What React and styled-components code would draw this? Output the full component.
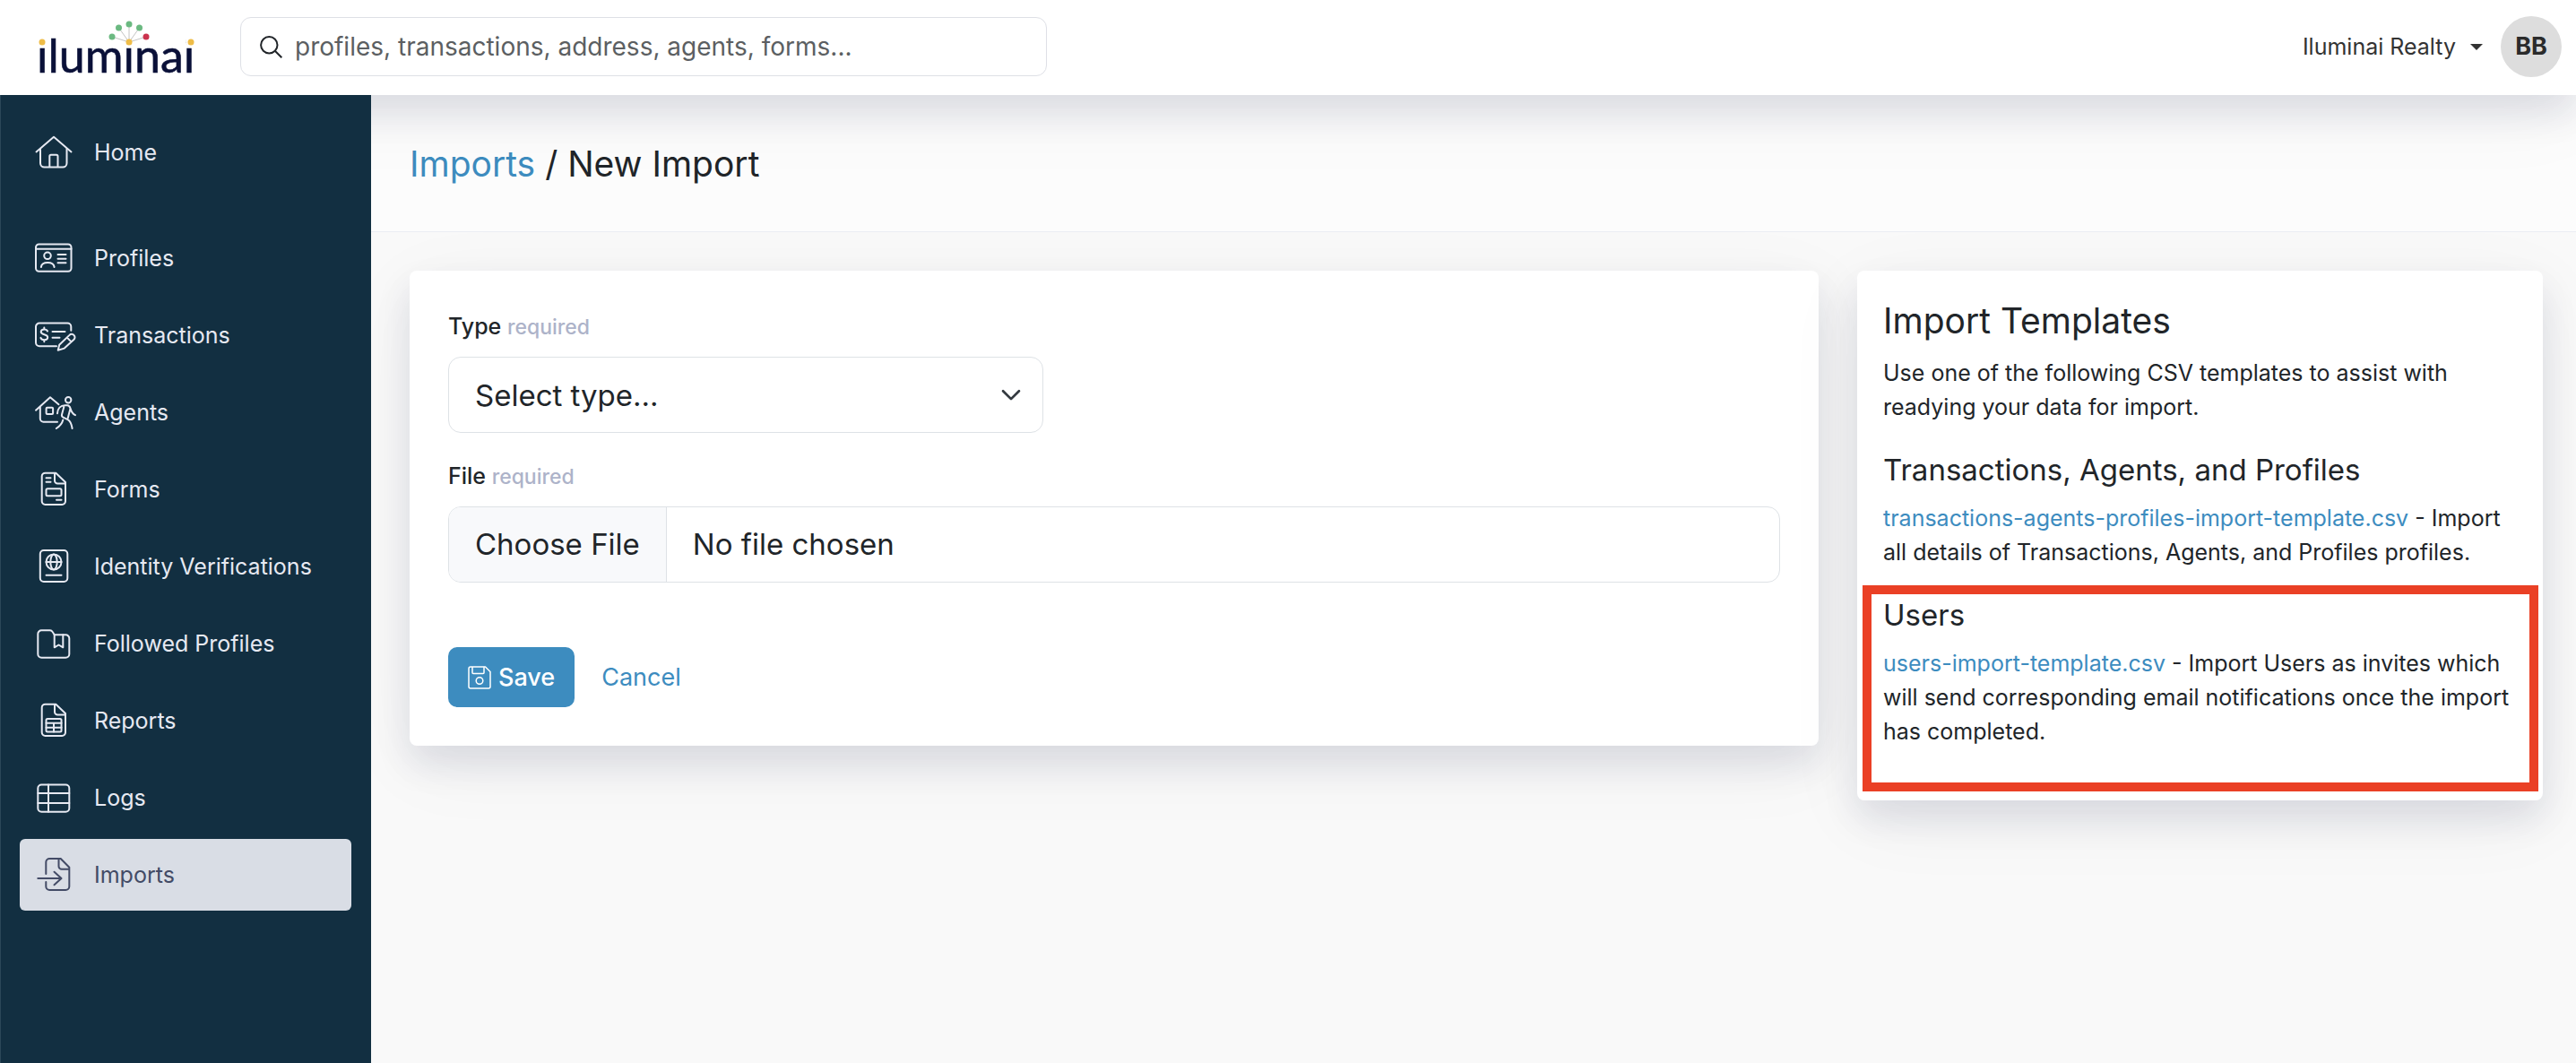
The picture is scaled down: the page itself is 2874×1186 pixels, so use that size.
import React from 'react';
import styled, { createGlobalStyle, css } from 'styled-components';

const GlobalStyle = createGlobalStyle`
    *, *::before, *::after {
        box-sizing: border-box;
    }

    body {
        margin: 0;
        background: #f9f9f9;
        color: #212529;
        font-family: Inter, "Liberation Sans", sans-serif;
        font-size: 25px;
        line-height: 38px;
    }

    h1, h2, h3, p, ul {
        margin: 0;
        padding: 0;
    }

    a {
        color: #3d8cbf;
        text-decoration: none;
    }

    button, input, select {
        font: inherit;
        color: inherit;
    }
`;

const softShadow = css`
    box-shadow: 0 20px 40px rgba(20, 30, 80, 0.11), 0 20px 90px rgba(0, 0, 0, 0.05);
`;

const Page = styled.div`
    display: flex;
    flex-direction: column;
    min-height: 100vh;
`;

const Header = styled.header`
    position: relative;
    z-index: 1;
    display: flex;
    align-items: center;
    height: 106px;
    padding: 0 16px 2px 36px;
    background: white;
    ${softShadow}
`;

const LogoLink = styled.a`
    display: flex;
    width: 232px;
`;

const SearchBox = styled.label`
    display: flex;
    align-items: center;
    gap: 14px;
    flex: 0 1 900px;
    height: 66px;
    padding: 0 21px;
    border: 1px solid #dee0e6;
    border-radius: 12px;
`;

const SearchInput = styled.input`
    flex: 1;
    min-width: 0;
    padding: 0;
    border: 0;
    outline: 0;
    background: none;
    font-size: 28px;

    &::placeholder {
        color: #5c5f62;
        opacity: 1;
    }
`;

const Account = styled.div`
    display: flex;
    align-items: center;
    gap: 20px;
    margin-left: auto;
`;

const AccountButton = styled.button`
    display: flex;
    align-items: center;
    gap: 16px;
    padding: 0;
    border: 0;
    background: none;
    color: #333;
`;

const Avatar = styled.span`
    display: flex;
    align-items: center;
    justify-content: center;
    width: 68px;
    height: 68px;
    border-radius: 50%;
    background: #ddd;
    color: #2b2b2b;
    font-size: 27px;
    font-weight: 700;
`;

const Body = styled.div`
    display: flex;
    flex: 1;
`;

const Sidebar = styled.nav`
    position: relative;
    z-index: 2;
    flex: 0 0 414px;
    padding: 24px 22px 24px 21px;
    border-left: 1px solid #2b4758;
    background: #122f41;
`;

const NavList = styled.ul`
    display: flex;
    flex-direction: column;
    gap: 6px;
    list-style: none;

    & + & {
        margin-top: 38px;
    }
`;

const NavLink = styled.a`
    display: flex;
    align-items: center;
    gap: 21px;
    height: 80px;
    padding: 0 14px;
    border-radius: 6px;
    background: ${props => (props.$active ? '#d9dde5' : 'transparent')};
    color: ${props => (props.$active ? '#434b66' : '#e6e9f2')};
`;

const NavIcon = styled.svg`
    flex: none;
    width: 48px;
    height: 48px;
    fill: none;
    stroke: currentColor;
    stroke-width: 2;
    stroke-linecap: round;
    stroke-linejoin: round;
    overflow: visible;
`;

const Main = styled.main`
    flex: 1;
    min-width: 0;
`;

const TitleBar = styled.div`
    padding: 50px 43px 49px;
    border-bottom: 1px solid #ebedf3;
    background: #fcfcfc;
`;

const Title = styled.h1`
    font-size: 39px;
    font-weight: 400;
    line-height: 53px;
`;

const Columns = styled.div`
    display: grid;
    grid-template-columns: minmax(0, 1572fr) minmax(0, 765fr);
    align-items: start;
    gap: 43px;
    padding: 43px 37px 43px 43px;
`;

const Card = styled.section`
    padding: ${props => props.$padding}px;
    border-radius: 8px;
    background: white;
    ${softShadow}
`;

const Field = styled.div`
    margin-bottom: 29px;
`;

const Label = styled.label`
    display: block;
    margin-bottom: 14px;
    font-weight: 500;
`;

const Required = styled.span`
    color: #adb3c9;
    font-size: 23px;
`;

const SelectWrap = styled.div`
    display: grid;
    align-items: center;
    width: 664px;
    max-width: 100%;

    > * {
        grid-area: 1 / 1;
    }

    > svg {
        justify-self: end;
        margin-right: 25px;
        pointer-events: none;
    }
`;

const Select = styled.select`
    width: 100%;
    height: 85px;
    padding: 0 29px;
    border: 1px solid #dee2e6;
    border-radius: 14px;
    appearance: none;
    background: white;
    font-size: 33px;
`;

const FileInput = styled.input`
    display: block;
    width: 100%;
    height: 85px;
    border: 1px solid #dee2e6;
    border-radius: 14px;
    overflow: hidden;
    font-size: 33px;
    line-height: 83px;

    &::file-selector-button {
        height: 83px;
        margin: 0 29px 0 0;
        padding: 0 29px;
        border: 0;
        border-right: 1px solid #dee2e6;
        background: #f8f9fb;
        color: inherit;
        font: inherit;
    }
`;

const Actions = styled.div`
    display: flex;
    align-items: center;
    gap: 30px;
    margin-top: 72px;
    font-size: 27px;
`;

const SaveButton = styled.button`
    display: flex;
    align-items: center;
    gap: 8px;
    height: 67px;
    padding: 0 22px;
    border: 0;
    border-radius: 10px;
    background: #3d8cbf;
    color: white;
    font-weight: 500;
`;

const CardTitle = styled.h2`
    margin-bottom: 12px;
    font-size: 39px;
    font-weight: 400;
    line-height: 54px;
`;

const Template = styled.div`
    position: relative;
    margin: 29px 0;
`;

const TemplateTitle = styled.h3`
    margin-bottom: 12px;
    font-size: 33px;
    font-weight: 400;
    line-height: 45px;
`;

const Highlight = styled.div`
    position: absolute;
    inset: -11px -24px -48px -23px;
    border: 10px solid #ea4025;
    pointer-events: none;
`;

const icons = {
    home: (
        <>
            <path d="M4.5 23.4 24 6.8l19.5 16.6" />
            <path d="M9 20v16a4.5 4.5 0 0 0 4.5 4.5H34a4.5 4.5 0 0 0 4.5-4.5V20" />
            <path d="M19.3 40V28.2a1.5 1.5 0 0 1 1.5-1.5H27a1.5 1.5 0 0 1 1.5 1.5V40" />
        </>
    ),
    profiles: (
        <>
            <rect x="4" y="8.5" width="39.5" height="30.3" rx="3.5" />
            <path d="M4 13.7h39.5M28.5 20h9M28.5 24.7h9M28.5 29.3h9M9.8 34c.5-3.5 3-5 7.4-5s6.9 1.5 7.4 5" />
            <circle cx="17" cy="21.3" r="3.8" />
        </>
    ),
    transactions: (
        <>
            <path d="M43.3 18.7v-4.2a4 4 0 0 0-4-4H8a4 4 0 0 0-4 4v17.8a4 4 0 0 0 4 4h19" />
            <path d="M17 19.5c-.6-1.4-2-2-3.7-2-2.2 0-3.6 1.1-3.6 2.8 0 3.9 7.5 2 7.5 6 0 1.8-1.6 2.9-3.9 2.9-2 0-3.4-.8-3.9-2.3M13.3 15.5v2M13.3 29.2v2M22.5 20h14M22.5 26.7h8" />
            <path d="m28.7 40.7 1.5-6 11.3-10.8c1.5-1.5 3.7-1.3 5 .1 1.3 1.3 1.4 3.3 0 4.7L35.8 38.6zM38.7 26.5l4.6 4.6" />
        </>
    ),
    agents: (
        <>
            <path d="M4 21.7 20 7.2l9.5 8M8.8 18v13a3.7 3.7 0 0 0 3.7 3.7H28" />
            <rect x="15.6" y="18.7" width="7.5" height="7.3" rx="1" />
            <circle cx="40.2" cy="10.3" r="3.2" />
            <path d="M28 25.3c.3-5.5 3.5-9 8.5-9h2.7c1.8.2 2.8 1.7 3.3 3.3 1.2 4 2.5 6.2 5.5 7.6M35.3 18 33 26.5c-.4 1.7.2 2.6 1.5 3.2l5.5 2.7c2.8 1.6 3.8 5 4.6 9.6M42.3 20.5l-2.6 10M34.3 32.5c-1 4-3.5 7-7.5 9.5" />
        </>
    ),
    forms: (
        <>
            <path d="M26.3 5.7H14.5a3.8 3.8 0 0 0-3.8 3.8v27.7a3.8 3.8 0 0 0 3.8 3.8h18.7a3.8 3.8 0 0 0 3.8-3.8V16zM25 6v8.2a3.3 3.3 0 0 0 3.3 3.3H37" />
            <rect x="15.5" y="23.3" width="17" height="8" rx="1.5" />
            <path d="M15.5 11.3h5M15.5 15.8h5M27 35.8h5.5" />
        </>
    ),
    identity: (
        <>
            <rect x="8.8" y="6" width="30.5" height="35" rx="4" />
            <circle cx="24" cy="19" r="8.5" />
            <ellipse cx="24" cy="19" rx="3.7" ry="8.5" />
            <path d="M15.5 19h17M15.5 33.7h17" />
        </>
    ),
    followed: (
        <>
            <path d="M6.3 13.3a4 4 0 0 1 4-4h9.2c2.3 0 3 1.2 5.2 5h12.6a4 4 0 0 1 4 4v17.4a4 4 0 0 1-4 4h-27a4 4 0 0 1-4-4z" />
            <path d="M24.7 14.3v14l4.8-2.8 4.8 2.8v-14" />
        </>
    ),
    reports: (
        <>
            <path d="M26.3 5.7H14.5a3.8 3.8 0 0 0-3.8 3.8v27.7a3.8 3.8 0 0 0 3.8 3.8h18.7a3.8 3.8 0 0 0 3.8-3.8V16zM25 6v8.2a3.3 3.3 0 0 0 3.3 3.3H37" />
            <rect x="15.5" y="22" width="17" height="14.5" rx="1.5" />
            <path d="M15.5 26.8h17M15.5 31.7h17M24 26.8v9.7" />
        </>
    ),
    logs: (
        <>
            <rect x="6.3" y="9.5" width="35" height="30.3" rx="4" />
            <path d="M6.3 19h35M6.3 30h35M18 9.5v30.3" />
        </>
    ),
    imports: (
        <>
            <path d="M15.3 23V10a4 4 0 0 1 4-4h12.4l9.6 9.8V37a4 4 0 0 1-4 4h-18a4 4 0 0 1-4-4v-5M29.5 6v8.5a3.3 3.3 0 0 0 3.3 3.3h8.5" />
            <path d="M6.3 28h26M24.5 20.7l8 7.3-8 7.3" />
        </>
    ),
};

const homeItem = [{ name: 'Home', icon: 'home' }];

const navItems = [
    { name: 'Profiles', icon: 'profiles' },
    { name: 'Transactions', icon: 'transactions' },
    { name: 'Agents', icon: 'agents' },
    { name: 'Forms', icon: 'forms' },
    { name: 'Identity Verifications', icon: 'identity' },
    { name: 'Followed Profiles', icon: 'followed' },
    { name: 'Reports', icon: 'reports' },
    { name: 'Logs', icon: 'logs' },
    { name: 'Imports', icon: 'imports', active: true },
];

const Logo = () => (
    <svg width="190" height="80" viewBox="0 -7 190 80">
        <text x="5" y="62" fontFamily="Lato, sans-serif" fontSize="52" fill="#0a1038" stroke="#0a1038" strokeWidth="0.6">iluminai</text>
        {/* the letter dots are replaced by the coloured ones */}
        <g fill="white">
            <circle cx="11" cy="27" r="6" />
            <circle cx="108" cy="27" r="6" />
            <circle cx="177" cy="27" r="6" />
        </g>
        <path d="M108 28 89 22M108 28 96.500 12M108 28V8M108 28l11.500-16M108 28l19-6" stroke="#c4c4c4" strokeWidth="1" fill="none" />
        <g fill="#6bb981">
            <circle cx="89" cy="22" r="3.5" />
            <circle cx="96.5" cy="12" r="3.5" />
            <circle cx="108" cy="8" r="3.5" />
            <circle cx="119.5" cy="12" r="3.5" />
        </g>
        <circle cx="127" cy="22" r="3.5" fill="#cb334e" />
        <g fill="#eebc47">
            <circle cx="11" cy="28" r="3.5" />
            <circle cx="108" cy="28" r="3.5" />
            <circle cx="177" cy="28" r="3.5" />
        </g>
    </svg>
);

const NavGroup = ({ items }) => (
    <NavList>
        {items.map(item => (
            <li key={item.name}>
                <NavLink href="#" $active={item.active}>
                    <NavIcon viewBox="0 0 48 48">{icons[item.icon]}</NavIcon>
                    {item.name}
                </NavLink>
            </li>
        ))}
    </NavList>
);

const ImportForm = () => (
    <Card as="form" $padding={43}>
        <Field>
            <Label htmlFor="type">Type <Required>required</Required></Label>
            <SelectWrap>
                <Select id="type">
                    <option>Select type...</option>
                </Select>
                <svg width="22" height="22" viewBox="0 0 16 16" fill="none" stroke="#343a40" strokeWidth="2" strokeLinecap="round" strokeLinejoin="round">
                    <path d="M1.5 4.5 8 11l6.5-6.5" />
                </svg>
            </SelectWrap>
        </Field>
        <Field>
            <Label htmlFor="file">File <Required>required</Required></Label>
            <FileInput id="file" type="file" />
        </Field>
        <Actions>
            <SaveButton type="button">
                <svg width="26" height="26" viewBox="0 0 26 26" fill="none" stroke="currentColor" strokeWidth="1.5" strokeLinejoin="round">
                    <path d="M3 1h16.5L25 6.5V23a2 2 0 0 1-2 2H3a2 2 0 0 1-2-2V3a2 2 0 0 1 2-2z" />
                    <path d="M5 1v6.5a1 1 0 0 0 1 1h11a1 1 0 0 0 1-1V1" />
                    <circle cx="13" cy="16.5" r="3.8" />
                </svg>
                Save
            </SaveButton>
            <a href="#">Cancel</a>
        </Actions>
    </Card>
);

const ImportTemplates = () => (
    <Card $padding={29}>
        <CardTitle>Import Templates</CardTitle>
        <p>Use one of the following CSV templates to assist with readying your data for import.</p>
        <Template>
            <TemplateTitle>Transactions, Agents, and Profiles</TemplateTitle>
            <p>
                <a href="#">transactions-agents-profiles-import-template.csv</a> - Import
                all details of Transactions, Agents, and Profiles profiles.
            </p>
        </Template>
        <Template>
            <TemplateTitle>Users</TemplateTitle>
            <p>
                <a href="#">users-import-template.csv</a> - Import Users as invites which
                will send corresponding email notifications once the import has completed.
            </p>
            <Highlight />
        </Template>
    </Card>
);

const App = () => {
    return (
        <Page>
            <GlobalStyle />
            <Header>
                <LogoLink href="#"><Logo /></LogoLink>
                <SearchBox>
                    <svg width="25" height="25" viewBox="0 0 25 25" fill="none" stroke="#212529" strokeWidth="2">
                        <circle cx="10.3" cy="10.3" r="9.2" />
                        <path d="m16.8 16.8 7.5 7.5" />
                    </svg>
                    <SearchInput type="text" aria-label="Search" placeholder="profiles, transactions, address, agents, forms..." />
                </SearchBox>
                <Account>
                    <AccountButton>
                        Iluminai Realty
                        <svg width="14" height="7" viewBox="0 0 14 7"><path d="M0 0h14L7 7z" fill="#333" /></svg>
                    </AccountButton>
                    <Avatar>BB</Avatar>
                </Account>
            </Header>
            <Body>
                <Sidebar>
                    <NavGroup items={homeItem} />
                    <NavGroup items={navItems} />
                </Sidebar>
                <Main>
                    <TitleBar>
                        <Title><a href="#">Imports</a> / New Import</Title>
                    </TitleBar>
                    <Columns>
                        <ImportForm />
                        <ImportTemplates />
                    </Columns>
                </Main>
            </Body>
        </Page>
    );
};

export default App;
